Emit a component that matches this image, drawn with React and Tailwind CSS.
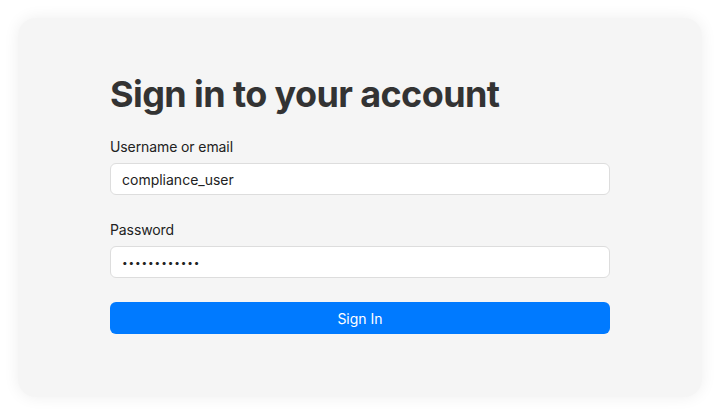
export default function App() {
  return (
    <div className="w-[720px] h-[416px] bg-white p-[18px]" style={{ fontFamily: 'Inter, "Noto Sans", sans-serif' }}>
      <div className="h-[379px] rounded-[18px] bg-[#f5f5f5] shadow-[0_0_16px_rgba(0,0,0,0.07)] px-[92px] pt-[56px]">
        <h1 className="text-[36px] leading-[40px] font-bold text-[#333333] tracking-[-0.6px]">Sign in to your account</h1>
        <div className="mt-[23px]">
          <label className="block text-[14px] leading-[20px] text-[#222222] tracking-[-0.1px]">Username or email</label>
          <div className="mt-[6px] h-[32px] rounded-[6px] border border-[#dddddd] bg-white px-[11px] flex items-center text-[14px] text-[#222222]">compliance_user</div>
        </div>
        <div className="mt-[25px]">
          <label className="block text-[14px] leading-[20px] text-[#222222] tracking-[-0.1px]">Password</label>
          <div className="mt-[6px] h-[32px] rounded-[6px] border border-[#dddddd] bg-white px-[11px] flex items-center text-[10px] tracking-[0.9px] text-[#222222]">••••••••••••</div>
        </div>
        <button className="mt-[24px] w-full h-[32px] rounded-[6px] bg-[#007aff] text-white text-[14px] flex items-center justify-center">Sign In</button>
      </div>
    </div>
  );
}
